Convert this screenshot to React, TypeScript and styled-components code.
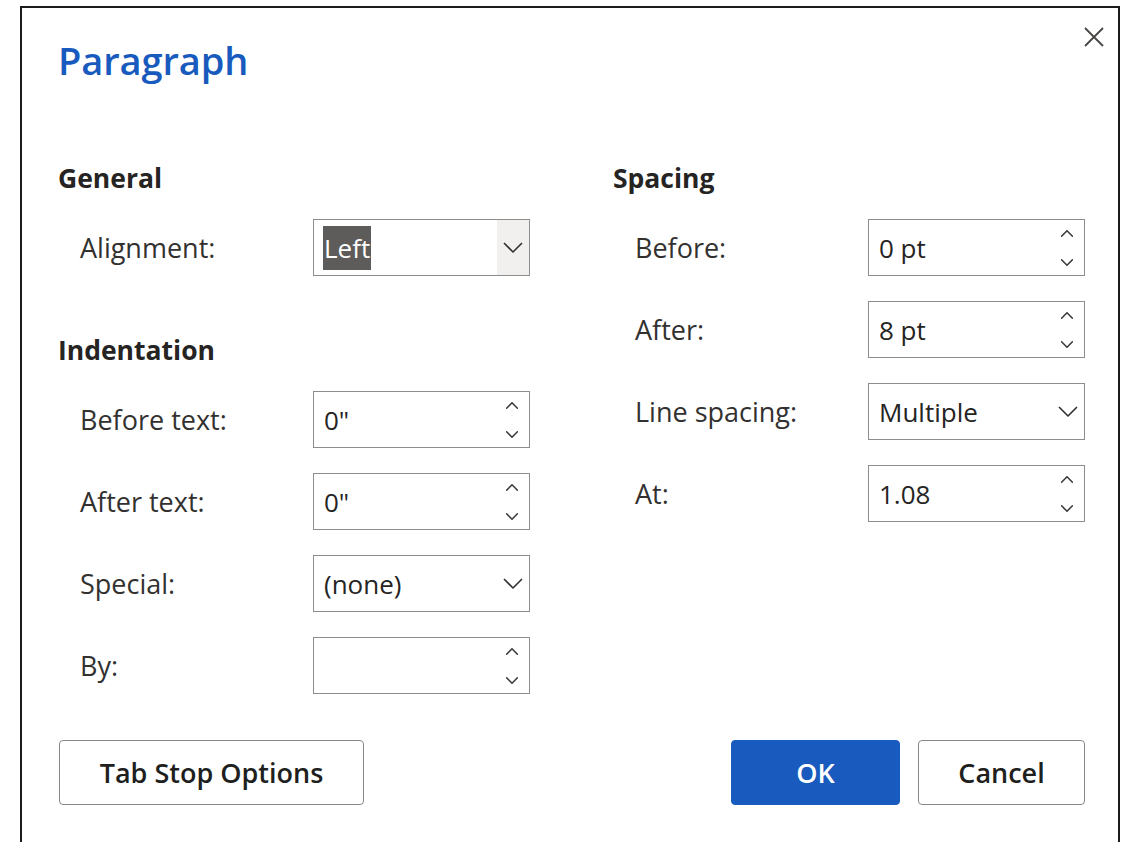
import styled, { createGlobalStyle } from "styled-components";

const GlobalStyle = createGlobalStyle`
  html, body {
    margin: 0;
    padding: 0;
    background: #ffffff;
    overflow: hidden;
  }
  body {
    font-family: "Open Sans", "Noto Sans", "Liberation Sans", sans-serif;
    color: #323130;
  }
`;

const Page = styled.div`
  padding: 6px 0 0 20px;
  width: 1127px;
  height: 842px;
  box-sizing: border-box;
`;

const Dialog = styled.div`
  width: 1100px;
  height: 100%;
  box-sizing: border-box;
  border: 2px solid #1b1b1b;
  border-bottom: none;
  padding: 24px 33px 0 37px;
  background: #fff;
`;

const Header = styled.div`
  display: flex;
  justify-content: space-between;
  align-items: flex-start;
  height: 126px;
`;

const Title = styled.h1`
  margin: 0 0 0 -1px;
  font-size: 38px;
  line-height: 56px;
  font-weight: 600;
  color: #185abd;
  letter-spacing: -0.1px;
`;

const CloseButton = styled.button`
  margin: -11px -25px 0 0;
  width: 32px;
  height: 32px;
  padding: 0;
  border: none;
  background: transparent;
  display: flex;
  align-items: center;
  justify-content: center;
  cursor: pointer;
`;

const Columns = styled.div`
  display: grid;
  grid-template-columns: 471px 471px;
  column-gap: 84px;
`;

const Column = styled.div`
  display: flex;
  flex-direction: column;
`;

const SectionTitle = styled.h2<{ $spaced?: boolean }>`
  margin: ${({ $spaced }) => ($spaced ? "54px" : "0")} 0 21px -1px;
  font-size: 26.5px;
  line-height: 40px;
  font-weight: 700;
  color: #252423;
`;

const Rows = styled.div`
  display: flex;
  flex-direction: column;
  gap: 25px;
`;

const Row = styled.div`
  display: grid;
  grid-template-columns: 233px 217px;
  padding-left: 21px;
  align-items: center;
  height: 57px;
`;

const Label = styled.span`
  font-size: 27px;
  color: #323130;
`;

const Field = styled.div`
  position: relative;
  display: flex;
  align-items: center;
  height: 57px;
  box-sizing: border-box;
  border: 1.5px solid #8f8d8b;
  background: #fff;
`;

const Value = styled.span<{ $selected?: boolean }>`
  margin-left: 9px;
  padding: 0 1px;
  font-size: 26px;
  line-height: 44px;
  color: ${({ $selected }) => ($selected ? "#ffffff" : "#252423")};
  background: ${({ $selected }) => ($selected ? "#5e5c5a" : "transparent")};
  flex: 1;
  flex-grow: ${({ $selected }) => ($selected ? 0 : 1)};
`;

const Spacer = styled.div`
  flex: 1;
`;

const DropButton = styled.div<{ $shaded?: boolean }>`
  align-self: stretch;
  width: 32px;
  display: flex;
  align-items: center;
  justify-content: center;
  background: ${({ $shaded }) => ($shaded ? "#f1f0ef" : "transparent")};
`;

const SpinButtons = styled.div`
  align-self: stretch;
  width: 34px;
  display: flex;
  flex-direction: column;
  align-items: center;
  justify-content: space-between;
  padding: 10px 0 9px;
  box-sizing: border-box;
`;

const Footer = styled.div`
  display: flex;
  align-items: center;
  margin-top: 46px;
`;

const FooterRight = styled.div`
  margin-left: auto;
  display: flex;
  gap: 18px;
`;

const Button = styled.button<{ $primary?: boolean; $width: number }>`
  width: ${({ $width }) => $width}px;
  height: 65px;
  border-radius: 4px;
  border: 1px solid ${({ $primary }) => ($primary ? "#185abd" : "#8a8886")};
  background: ${({ $primary }) => ($primary ? "#185abd" : "#ffffff")};
  color: ${({ $primary }) => ($primary ? "#ffffff" : "#201f1e")};
  font-family: inherit;
  font-size: 27px;
  font-weight: 600;
  cursor: pointer;
`;

const Chevron = ({ up }: { up?: boolean }) => (
  <svg width="12" height="7" viewBox="0 0 20 11" fill="none">
    <path
      d={up ? "M1 10 L10 1 L19 10" : "M1 1 L10 10 L19 1"}
      stroke="#3b3a39"
      strokeWidth="2.6"
      strokeLinecap="round"
      strokeLinejoin="round"
    />
  </svg>
);

const SelectChevron = () => (
  <svg width="20" height="11" viewBox="0 0 20 11" fill="none">
    <path
      d="M1 1 L10 10 L19 1"
      stroke="#323130"
      strokeWidth="1.6"
      strokeLinejoin="round"
    />
  </svg>
);

const CloseIcon = () => (
  <svg width="20" height="20" viewBox="0 0 20 20" fill="none">
    <path d="M1 1 L19 19 M19 1 L1 19" stroke="#484644" strokeWidth="1.8" />
  </svg>
);

const SpinField = ({ value }: { value: string }) => (
  <Field>
    <Value>{value}</Value>
    <SpinButtons>
      <Chevron up />
      <Chevron />
    </SpinButtons>
  </Field>
);

const SelectField = ({
  value,
  selected,
}: {
  value: string;
  selected?: boolean;
}) => (
  <Field>
    <Value $selected={selected}>{value}</Value>
    {selected && <Spacer />}
    <DropButton $shaded={selected}>
      <SelectChevron />
    </DropButton>
  </Field>
);

export default function App() {
  return (
    <>
      <GlobalStyle />
      <Page>
        <Dialog>
          <Header>
            <Title>Paragraph</Title>
            <CloseButton aria-label="Close">
              <CloseIcon />
            </CloseButton>
          </Header>
          <Columns>
            <Column>
              <SectionTitle>General</SectionTitle>
              <Rows>
                <Row>
                  <Label>Alignment:</Label>
                  <SelectField value="Left" selected />
                </Row>
              </Rows>
              <SectionTitle $spaced>Indentation</SectionTitle>
              <Rows>
                <Row>
                  <Label>Before text:</Label>
                  <SpinField value={'0"'} />
                </Row>
                <Row>
                  <Label>After text:</Label>
                  <SpinField value={'0"'} />
                </Row>
                <Row>
                  <Label>Special:</Label>
                  <SelectField value="(none)" />
                </Row>
                <Row>
                  <Label>By:</Label>
                  <SpinField value="" />
                </Row>
              </Rows>
            </Column>
            <Column>
              <SectionTitle>Spacing</SectionTitle>
              <Rows>
                <Row>
                  <Label>Before:</Label>
                  <SpinField value="0 pt" />
                </Row>
                <Row>
                  <Label>After:</Label>
                  <SpinField value="8 pt" />
                </Row>
                <Row>
                  <Label>Line spacing:</Label>
                  <SelectField value="Multiple" />
                </Row>
                <Row>
                  <Label>At:</Label>
                  <SpinField value="1.08" />
                </Row>
              </Rows>
            </Column>
          </Columns>
          <Footer>
            <Button $width={305}>Tab Stop Options</Button>
            <FooterRight>
              <Button $primary $width={169}>
                OK
              </Button>
              <Button $width={167}>Cancel</Button>
            </FooterRight>
          </Footer>
        </Dialog>
      </Page>
    </>
  );
}
